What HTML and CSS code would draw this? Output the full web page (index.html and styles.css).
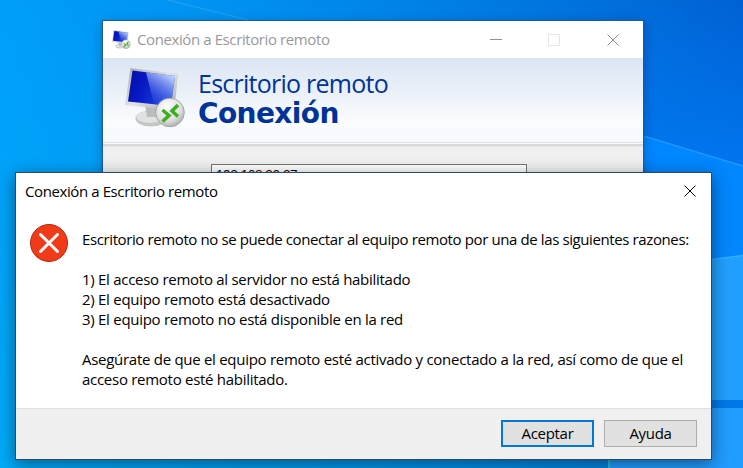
FILE: index.html
```html
<!DOCTYPE html>
<html lang="es">
<head>
<meta charset="utf-8">
<title>Conexión a Escritorio remoto</title>
<link rel="stylesheet" href="styles.css">
</head>
<body>
<main class="desktop">
  <svg class="wallpaper" viewBox="0 0 743 468" aria-hidden="true">
    <defs>
      <linearGradient id="sky" x1="0" y1="0" x2="1" y2="0">
        <stop offset="0" stop-color="#009ff9"/>
        <stop offset=".35" stop-color="#008fee"/>
        <stop offset=".7" stop-color="#0078e0"/>
        <stop offset="1" stop-color="#0061d4"/>
      </linearGradient>
      <linearGradient id="left" x1="0" y1="0" x2="0" y2="1">
        <stop offset="0" stop-color="#00a8fa" stop-opacity="0"/>
        <stop offset="1" stop-color="#00aaf8"/>
      </linearGradient>
      <linearGradient id="dusk" x1="0" y1="0" x2="0" y2="1">
        <stop offset="0" stop-color="#0078f2" stop-opacity="0"/>
        <stop offset="1" stop-color="#0078f2" stop-opacity=".9"/>
      </linearGradient>
      <linearGradient id="beam" x1="0" y1="0" x2="0" y2="1">
        <stop offset="0" stop-color="#0087ff"/>
        <stop offset="1" stop-color="#0a84f6"/>
      </linearGradient>
      <linearGradient id="floor" x1="0" y1="0" x2="1" y2="0">
        <stop offset="0" stop-color="#00aaf8"/>
        <stop offset=".5" stop-color="#009bec"/>
        <stop offset="1" stop-color="#0086e2"/>
      </linearGradient>
    </defs>
    <path fill="url(#sky)" d="M0 0h743v468H0z"/>
    <path fill="url(#left)" d="M0 0h400v468H0z"/>
    <path fill="url(#dusk)" d="M640 0h103v166H640z"/>
    <path d="M168 0 252 21" stroke="#2ba5f4" stroke-width="1.500" opacity=".6"/>
    <path fill="url(#beam)" d="M640 135 743 166V468H640z"/>
    <path d="M640 135 743 166" stroke="#1d98ff" stroke-width="1.500"/>
    <path fill="#219fff" d="M700 261 743 255.500V400H700z"/>
    <path d="M700 261 743 255.500" stroke="#2ab2ff" stroke-width="1.500"/>
    <path fill="#0079e8" d="M640 400H743V408H640z"/>
    <path fill="url(#floor)" d="M0 440H609V468H0z"/>
    <path fill="#219cff" d="M609 408H743V468H609z"/>
    <path fill="#1fc4e4" d="M608 408h2v60h-2z"/>
  </svg>

  <section class="window">
    <header class="titlebar">
      <svg class="app-icon" viewBox="0 0 64 64"><use href="#rdp"/></svg>
      <span class="caption">Conexión a Escritorio remoto</span>
      <svg class="controls" viewBox="0 0 130 12" fill="none">
        <path d="M0 5.500h12" stroke="#8f8f8f"/>
        <path d="M58.500 .5h11v11h-11z" stroke="#e7e7e7"/>
        <path d="M117.500 .5l11 11M128.500 .5l-11 11" stroke="#8c8c8c"/>
      </svg>
    </header>
    <div class="banner">
      <svg class="logo" viewBox="0 0 64 64">
        <defs>
          <linearGradient id="screen" x1="0" y1="0" x2="1" y2=".3">
            <stop offset="0" stop-color="#0011a4"/>
            <stop offset=".4" stop-color="#0719c4"/>
            <stop offset="1" stop-color="#1c46dc"/>
          </linearGradient>
          <linearGradient id="glare" x1=".8" y1="0" x2=".3" y2="1">
            <stop offset="0" stop-color="#d0dfff"/>
            <stop offset="1" stop-color="#1f3ee0" stop-opacity=".3"/>
          </linearGradient>
          <linearGradient id="bezel" x1="0" y1="0" x2="1" y2="1">
            <stop offset="0" stop-color="#a9adb1"/>
            <stop offset=".5" stop-color="#e2e2e2"/>
            <stop offset="1" stop-color="#aaa"/>
          </linearGradient>
          <radialGradient id="disc" cx=".4" cy=".3" r=".75">
            <stop offset="0" stop-color="#fff"/>
            <stop offset=".65" stop-color="#dedede"/>
            <stop offset="1" stop-color="#a8a8a8"/>
          </radialGradient>
        </defs>
        <g id="rdp">
          <ellipse cx="26" cy="51.500" rx="15.500" ry="8" fill="#c4c6c6"/>
          <ellipse cx="25" cy="50" rx="13.500" ry="6" fill="#e0e1e1"/>
          <path d="M20 38 33 41 32 50H22z" fill="#babcbd"/>
          <path d="M5.500 1 53 7 49.500 43 0 38z" fill="url(#bezel)"/>
          <path d="M7.500 3.500 50 9 46 39 3 34.500z" fill="url(#screen)"/>
          <path d="M21 5.300 50 9 46 39 29 37.200z" fill="url(#glare)"/>
          <circle cx="45" cy="45.500" r="14.300" fill="url(#disc)" stroke="#a5a7a7"/>
          <path d="M37.500 43l6.500 5.500-6.500 6M53 38l-6 6 6 5.500" fill="none" stroke="#3fae1f" stroke-width="3.600"/>
        </g>
      </svg>
      <div class="product">
        <span class="product-name">Escritorio remoto</span>
        <strong class="product-kind">Conexión</strong>
      </div>
    </div>
    <div class="divider"></div>
    <div class="form">
      <div class="computer">192.168.20.27</div>
    </div>
  </section>

  <section class="dialog">
    <header class="dialog-title">
      <span class="caption">Conexión a Escritorio remoto</span>
      <svg class="close" viewBox="0 0 12 12"><path d="M.5 .5l11 11M11.500 .5l-11 11" stroke="#000"/></svg>
    </header>
    <div class="content">
      <svg class="error" viewBox="0 0 38 38">
        <circle cx="19" cy="19" r="18.500" fill="#f13a17" stroke="#ad2a12"/>
        <path d="M10.500 10.500l17 17M27.500 10.500l-17 17" stroke="#fff" stroke-width="3" stroke-linecap="round"/>
      </svg>
      <div class="message">
        <p class="lead">Escritorio remoto no se puede conectar al equipo remoto por una de las siguientes razones:</p>
        <ul class="reasons">
          <li>1) El acceso remoto al servidor no está habilitado</li>
          <li>2) El equipo remoto está desactivado</li>
          <li>3) El equipo remoto no está disponible en la red</li>
        </ul>
        <p>Asegúrate de que el equipo remoto esté activado y conectado a la red, así como de que el<br>acceso remoto esté habilitado.</p>
      </div>
    </div>
    <footer class="actions">
      <button class="button primary">Aceptar</button>
      <button class="button">Ayuda</button>
    </footer>
  </section>
</main>
</body>
</html>
```
FILE: styles.css
```css
* { box-sizing: border-box; }
body {
  margin: 0;
  font: 15px/20px "Open Sans", "Noto Sans", sans-serif;
  color: #000;
}
.desktop { position: relative; width: 743px; height: 468px; overflow: hidden; }
.wallpaper { display: block; width: 743px; height: 468px; }
svg { flex: none; }

.window {
  position: absolute; left: 102px; top: 20px; width: 542px; height: 400px;
  border: 1px solid #1b5c95;
  background: #f0f0f0;
  box-shadow: 0 3px 10px rgba(0, 20, 60, .35);
}
.titlebar {
  height: 37px; padding: 0 23px 0 9px;
  display: flex; align-items: center;
  background: #fff; color: #999;
}
.titlebar .caption { margin-top: -2px; }
.app-icon { width: 20px; height: 20px; margin-right: 5px; }
.caption { letter-spacing: -.4px; white-space: nowrap; }
.controls { width: 130px; height: 12px; margin-left: auto; }
.banner {
  height: 84px; padding: 9px 0 0 22px;
  display: flex; gap: 9px;
  background: linear-gradient(#dae5f3, #edf2f9 45%, #fafcfd 75%, #f5f9fe);
}
.logo { width: 64px; height: 64px; }
.product { display: flex; flex-direction: column; color: #003399; white-space: nowrap; }
.product-name { font-size: 25px; line-height: 32px; letter-spacing: -.75px; }
.product-kind { font: bold 28px/30px "DejaVu Sans", sans-serif; letter-spacing: -.6px; }
.divider {
  height: 5px;
  background: linear-gradient(#dfe2e8 0 1px, #f8f8f8 1px 2px, #d9d9d9 2px 4px, #e8e8e8 4px);
}
.form { padding: 17px 0 0 108px; }
.computer {
  width: 316px; height: 28px; padding: 0 4px;
  border: 1px solid #767676; background: #fff;
  font: 13.5px/20px "Liberation Sans", sans-serif; letter-spacing: -.4px;
}

.dialog {
  position: absolute; left: 15px; top: 172px; width: 697px; height: 288px;
  display: flex; flex-direction: column;
  border: 1px solid #2b4a60;
  background: #fff;
  box-shadow: 0 4px 16px rgba(0, 0, 0, .45);
}
.dialog-title {
  flex: none; height: 36px; padding: 0 15px 0 9px;
  display: flex; align-items: center; justify-content: space-between;
}
.close { width: 12px; height: 12px; }
.content { flex: 1; min-height: 0; display: flex; gap: 14px; padding: 15px 0 0 14px; }
.error { width: 38px; height: 38px; }
.message { padding-top: 5px; white-space: nowrap; letter-spacing: -.28px; }
.lead { letter-spacing: -.39px; }
.message p, .reasons { margin: 0 0 20px; padding: 0; list-style: none; }
.message p:last-child { margin: 0; }
.actions {
  flex: none; height: 51px; padding: 11px 14px 0 0;
  display: flex; align-items: flex-start; justify-content: flex-end; gap: 10px;
  border-top: 1px solid #dfdfdf; background: #f0f0f0;
}
.button {
  width: 93px; height: 27px; padding: 0 0 2px;
  border: 1px solid #adadad; background: #e1e1e1;
  font: inherit; letter-spacing: -.3px; color: #000;
}
.primary { border: 2px solid #0078d7; }
```
